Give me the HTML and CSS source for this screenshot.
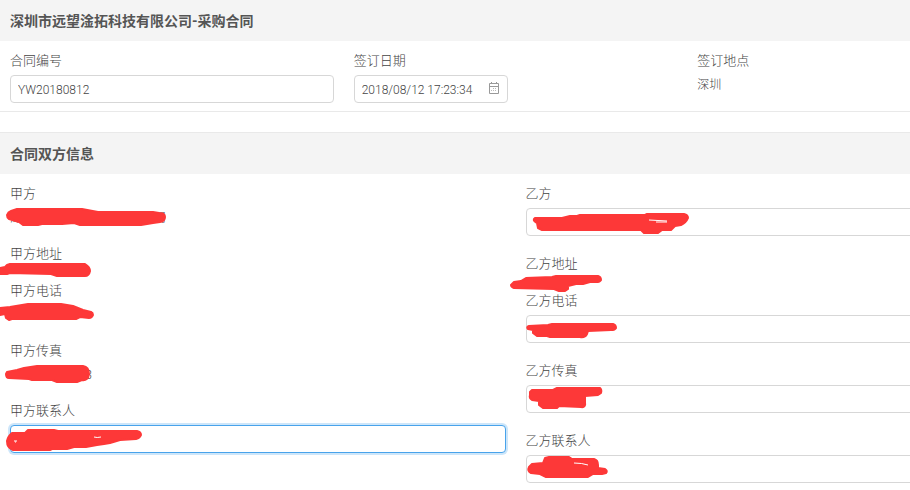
FILE: index.html
```html
<!DOCTYPE html>
<html lang="zh-CN">
<head>
    <meta charset="UTF-8">
    <meta name="viewport" content="width=device-width, initial-scale=1.0">
    <title>采购合同</title>
    <link rel="stylesheet" href="styles.css">
</head>
<body>
    <form class="contract">
        <h2 class="panel-title">深圳市远望淦拓科技有限公司-采购合同</h2>
        <div class="row row-three">
            <div class="field">
                <label for="contract-no">合同编号</label>
                <input type="text" id="contract-no" value="YW20180812">
            </div>
            <div class="field">
                <label for="sign-date">签订日期</label>
                <div class="date-box">
                    <input type="text" id="sign-date" value="2018/08/12 17:23:34">
                    <svg class="date-icon" width="12" height="12" viewBox="0 0 12 12">
                        <path d="M1.5 1.5h9v10h-9zM1.5 4.5h9M3.5 0v2M8.5 0v2"/>
                        <path class="dots" d="M5 6.5h1M7 6.5h1M3 8.5h1M5 8.5h1M7 8.5h1"/>
                    </svg>
                </div>
            </div>
            <div class="field">
                <span class="label">签订地点</span>
                <span class="value">深圳</span>
            </div>
        </div>

        <h2 class="panel-title panel-next">合同双方信息</h2>
        <div class="row row-two">
            <!-- 甲方 -->
            <div class="party">
                <div class="field">
                    <span class="label">甲方</span>
                    <span class="value">深圳市远望淦拓科技有限公司</span>
                </div>
                <div class="field field-address">
                    <span class="label">甲方地址</span>
                    <span class="value"></span>
                </div>
                <div class="field">
                    <span class="label">甲方电话</span>
                    <span class="value"></span>
                </div>
                <div class="field">
                    <span class="label">甲方传真</span>
                    <span class="value value-fax">3</span>
                </div>
                <div class="field">
                    <label for="a-contact">甲方联系人</label>
                    <input type="text" id="a-contact" class="active">
                </div>
            </div>

            <!-- 乙方 -->
            <div class="party">
                <div class="field">
                    <label for="b-name">乙方</label>
                    <input type="text" id="b-name">
                </div>
                <div class="field field-address">
                    <span class="label">乙方地址</span>
                    <span class="value"></span>
                </div>
                <div class="field">
                    <label for="b-phone">乙方电话</label>
                    <input type="text" id="b-phone">
                </div>
                <div class="field">
                    <label for="b-fax">乙方传真</label>
                    <input type="text" id="b-fax">
                </div>
                <div class="field">
                    <label for="b-contact">乙方联系人</label>
                    <input type="text" id="b-contact">
                </div>
            </div>
        </div>

        <!-- red marker strokes over the private values -->
        <svg class="marker" width="910" height="490" viewBox="0 0 910 490" aria-hidden="true">
            <path d="M11 211L17 209H82L98 212L153 212L159 213Q165 213 165 217Q165 221 160 222L153 223L141 225H80L74 223L62 224H42L38 225H23L19 222L9 219Q7 218 7 215Q8 212 11 211Z"/>
            <path d="M0 268L5 267L7 265L10 264H85Q90 267 90 271Q89 276 85 276H57L51 274L10 273L7 274H0Z"/>
            <path d="M0 308L10 307L28 304H61L73 306L83 310L91 312Q93 313 93 315Q92 318 89 318L80 317L76 319H12L9 320L6 318L5 314L0 315Z"/>
            <path d="M7 372L17 370L24 368L37 366H83Q89 367 89 374Q88 381 82 380L77 382H57L52 380H32L29 379L9 378Q6 378 6 374Z"/>
            <path d="M12 433L25 433L28 430H54L58 431H137Q141 432 141 435Q140 438 136 439L120 440L110 443L104 444L97 445L86 447H74L67 449H52L50 450H13Q7 448 7 441Q8 436 12 433Z"/>
            <path class="gap" d="M14 441H17M15 442H16M94 437Q97 438 101 437"/>
            <path d="M535 218L562 218L570 216H577L580 215H645L647 214H684Q688 215 688 218Q686 223 681 225L675 226L671 230L662 230L658 233H644L641 230H542L538 228L537 223Q533 221 534 219Z"/>
            <path class="gap" d="M649 220L667 221M656 222H667"/>
            <path d="M514 282L521 281L526 278L552 277L556 276H598Q601 277 601 280Q600 282 596 282H590L583 284H576L568 286V289L565 291H559L554 289L514 288Q511 287 511 285Z"/>
            <path d="M529 326L548 325L552 324H613Q616 325 616 328Q615 330 611 330L588 331L587 334Q585 338 580 337H550L547 336H537L533 333V330L528 329Q526 327 529 326Z"/>
            <path d="M532 390L553 390L557 388H600Q602 390 601 393L598 395L585 396V402Q586 408 581 407L559 406L557 408H543L539 405V401L532 400Q529 398 530 395L530 392Z"/>
            <path d="M532 464L543 463L545 458L549 457H569L572 459H594Q598 460 598 465V468L605 469Q608 471 606 473L602 474H593L588 477H546L540 474L531 473Q527 471 529 467Z"/>
            <path class="gap" d="M574 463Q582 463 588 465"/>
        </svg>
    </form>
</body>
</html>
```
FILE: styles.css
```css
* {
    box-sizing: border-box;
}

body {
    margin: 0;
    overflow: hidden;
    background-color: #fff;
    color: #444;
    font-family: Roboto, "Noto Sans CJK SC", sans-serif;
    font-size: 12px;
    font-weight: 300;
}

.contract {
    position: relative;
    min-width: 1031px; /* wider than small windows, the right side is cut */
}

.panel-title {
    margin: 0;
    padding: 2px 10px 0;
    background-color: #f4f4f4;
    color: #555;
    font-size: 14px;
    font-weight: 700;
    line-height: 39px;
}

.panel-next {
    margin-top: 20px;
    border-top: 1px solid #e9e9e9;
}

.row {
    display: grid;
    padding-top: 10px;
}

.row-three {
    grid-template-columns: repeat(3, 1fr);
    padding-bottom: 8px;
    border-bottom: 1px solid #e9e9e9;
}

.row-two {
    grid-template-columns: repeat(2, 1fr);
}

.party {
    display: flex;
    flex-direction: column;
    gap: 18px;
}

.field {
    display: flex;
    flex-direction: column;
    gap: 4px;
    padding: 0 10px;
}

.field label,
.field .label {
    font-size: 13px;
    line-height: 20px;
}

.field .value {
    height: 18px;
    line-height: 20px;
}

/* address sits tight between its neighbours */
.field-address {
    gap: 0;
    height: 19px;
}

.field .value-fax {
    width: 82px;
    text-align: right;
}

.field input {
    width: 100%;
    height: 28px;
    padding: 2px 7px 0;
    border: 1px solid #d7d7d7;
    border-radius: 4px;
    background-color: #fff;
    color: inherit;
    font: inherit;
    outline: none;
}

.field input:focus,
.field input.active {
    border-color: #48a3eb;
    box-shadow: 0 0 0 2px #cde6fa;
}

.date-box {
    position: relative;
    width: 154px;
}

.date-icon {
    position: absolute;
    top: 7px;
    right: 8px;
    fill: none;
    stroke: #999;
}

.date-icon .dots {
    stroke: #bbb;
}

.marker {
    position: absolute;
    top: 0;
    left: 0;
    fill: #fd3838;
    stroke: #fd3838;
    stroke-width: 2;
    stroke-linejoin: round;
    pointer-events: none;
}

.marker .gap {
    fill: none;
    stroke: #fff;
    stroke-width: 1;
}
```
